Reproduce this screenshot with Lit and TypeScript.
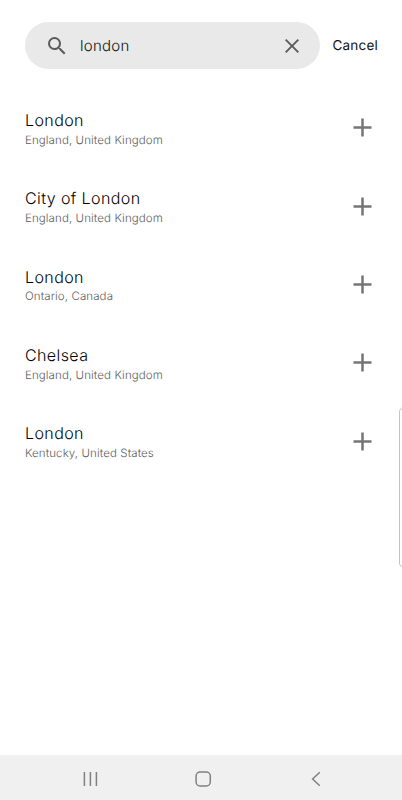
import { LitElement, html, css } from "lit";
import { customElement } from "lit/decorators.js";

interface Place {
  name: string;
  region: string;
}

const PLACES: Place[] = [
  { name: "London", region: "England, United Kingdom" },
  { name: "City of London", region: "England, United Kingdom" },
  { name: "London", region: "Ontario, Canada" },
  { name: "Chelsea", region: "England, United Kingdom" },
  { name: "London", region: "Kentucky, United States" },
];

@customElement("search-bar")
class SearchBar extends LitElement {
  static styles = css`
    :host {
      display: flex;
      align-items: center;
      height: 47px;
      padding: 22.3px 24px 0 25px;
    }
    .field {
      display: flex;
      align-items: center;
      box-sizing: border-box;
      width: 294.7px;
      height: 47px;
      padding: 0 16px 0 19.5px;
      border-radius: 24px;
      background: #e9e9e9;
    }
    svg {
      display: block;
      flex: none;
      width: 24px;
      height: 24px;
      fill: #5a5a5a;
      overflow: visible;
    }
    .query {
      flex: 1;
      margin: 0 0 0 11.5px;
      font-size: 15px;
      font-weight: 300;
      letter-spacing: 0.25px;
      color: #111;
    }
    .cancel {
      margin: 1px 0 0 13px;
      font-size: 13.5px;
      font-weight: 400;
      letter-spacing: 0.2px;
      color: #111;
      white-space: nowrap;
    }
  `;
  render() {
    return html`
      <div class="field">
        <svg viewBox="0 0 24 24">
          <path d="M15.5 14h-.79l-.28-.27A6.47 6.47 0 0 0 16 9.5 6.5 6.5 0 1 0 9.5 16c1.61 0 3.09-.59 4.23-1.57l.27.28v.79l5 4.99L20.49 19l-4.99-5zm-6 0a4.5 4.5 0 1 1 0-9 4.5 4.5 0 0 1 0 9z" />
        </svg>
        <span class="query">london</span>
        <svg viewBox="0 0 24 24">
          <path d="M19 6.31 17.69 5 12 10.69 6.31 5 5 6.31 10.69 12 5 17.69 6.31 19 12 13.31 17.69 19 19 17.69 13.31 12z" />
        </svg>
      </div>
      <span class="cancel">Cancel</span>
    `;
  }
}

@customElement("place-list")
class PlaceList extends LitElement {
  static styles = css`
    :host {
      display: block;
      padding: 19.4px 30px 0 25px;
    }
    .row {
      display: flex;
      align-items: center;
      justify-content: space-between;
      height: 78.35px;
    }
    .text {
      padding-top: 1.9px;
    }
    .name {
      font-size: 16px;
      line-height: 20px;
      font-weight: 300;
      letter-spacing: 0.4px;
      color: #000;
    }
    .region {
      margin-top: 1.6px;
      font-size: 11.5px;
      line-height: 16px;
      font-weight: 300;
      letter-spacing: 0.1px;
      color: #5c5c5c;
    }
    .add {
      display: block;
      width: 19px;
      height: 19px;
      fill: none;
      stroke: #757575;
      stroke-width: 2.5;
    }
  `;
  render() {
    return PLACES.map(
      (place) => html`
        <div class="row">
          <div class="text">
            <div class="name">${place.name}</div>
            <div class="region">${place.region}</div>
          </div>
          <svg class="add" viewBox="0 0 19 19"><path d="M9.5 .5v18M.5 9.5h18" /></svg>
        </div>
      `
    );
  }
}

@customElement("nav-bar")
class NavBar extends LitElement {
  static styles = css`
    :host {
      display: flex;
      align-items: center;
      justify-content: space-between;
      box-sizing: border-box;
      height: 45.5px;
      padding: 3.5px 76px 0 80px;
      background: #f0f0f0;
    }
    svg {
      display: block;
      width: 20px;
      height: 20px;
      fill: none;
      stroke: #808080;
      stroke-width: 1.5;
    }
  `;
  render() {
    return html`
      <svg viewBox="0 0 20 20"><path d="M4.4 3v14M10.4 3v14M16.4 3v14" /></svg>
      <svg viewBox="0 0 20 20"><rect x="3.1" y="3" width="14.2" height="14" rx="4" /></svg>
      <svg viewBox="0 0 20 20"><path d="M13.8 3.2 6.6 10l7.2 6.8" /></svg>
    `;
  }
}

@customElement("app-root")
class AppRoot extends LitElement {
  static styles = css`
    :host {
      display: flex;
      flex-direction: column;
      position: relative;
      width: 402px;
      height: 800px;
      overflow: hidden;
      background: #fff;
      font-family: Inter, "Noto Sans", sans-serif;
      text-rendering: geometricPrecision;
    }
    .results {
      flex: 1;
    }
    .edge-handle {
      position: absolute;
      top: 407px;
      right: -8px;
      box-sizing: border-box;
      width: 11px;
      height: 161px;
      border: 1px solid #c4c4c4;
      border-radius: 5px;
    }
  `;
  render() {
    return html`
      <search-bar></search-bar>
      <place-list class="results"></place-list>
      <nav-bar></nav-bar>
      <div class="edge-handle"></div>
    `;
  }
}
